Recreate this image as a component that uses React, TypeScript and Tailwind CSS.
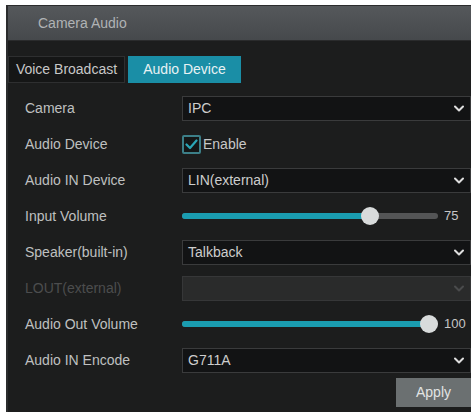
import { ReactNode } from 'react';

function Chevron({ dim }: { dim?: boolean }) {
  return (
    <svg width="10" height="7" viewBox="0 0 10 7" className="shrink-0">
      <polyline points="1,1.5 5,5.5 9,1.5" fill="none" stroke={dim ? '#4a4b4c' : '#dedede'} strokeWidth="2" strokeLinecap="round" strokeLinejoin="round" />
    </svg>
  );
}

function Select({ value, disabled }: { value?: string; disabled?: boolean }) {
  return (
    <div
      className={`flex h-[25px] flex-1 items-center justify-between border pl-[5px] pr-[6px] ${
        disabled ? 'border-[#363738] bg-[#2a2b2b]' : 'border-[#3a3b3c] bg-[#121314]'
      }`}
    >
      <span className="text-[14px] text-[#cdcdcd]">{value}</span>
      <Chevron dim={disabled} />
    </div>
  );
}

function Slider({ value }: { value: number }) {
  return (
    <div className="flex flex-1 items-center">
      <div className="relative h-[6px] w-[256px] rounded-full bg-[#545556]">
        <div
          className="absolute left-0 top-0 h-full rounded-full bg-[#1a9db0]"
          style={{ width: `${9 + (value / 100) * 238}px` }}
        />
        <div
          className="absolute top-1/2 h-[18px] w-[18px] -translate-y-1/2 rounded-full bg-[#d8dbdb]"
          style={{ left: `${(value / 100) * 238}px` }}
        />
      </div>
      <span className="ml-[6px] text-[13px] text-[#c6c6c6]">{value}</span>
    </div>
  );
}

function Row({ label, dim, children }: { label: string; dim?: boolean; children: ReactNode }) {
  return (
    <div className="flex h-[36px] items-center">
      <div className={`w-[174px] pl-[17px] text-[14px] ${dim ? 'text-[#4c4d4e]' : 'text-[#bfc0c0]'}`}>{label}</div>
      <div className="flex flex-1 items-center">{children}</div>
    </div>
  );
}

export default function App() {
  return (
    <div
      className="h-[412px] w-[473px] bg-white pl-[6px] pr-[2px] pt-[5px]"
      style={{ fontFamily: '"Liberation Sans", Arial, sans-serif' }}
    >
      <div className="flex h-full flex-col border-l-2 border-t border-[#2b2c2d] bg-[#1c1d1d]">
        <div className="flex h-[35px] items-center border-b border-[#2a2b2c] bg-gradient-to-b from-[#55585b] to-[#46494c] pl-[30px] text-[14px] text-[#b0b3b5]">
          Camera Audio
        </div>

        <div className="mt-[15px] flex h-[27px]">
          <div className="flex w-[117px] items-center justify-center border border-[#2e2f30] bg-[#151616] text-[14px] text-[#c8c8c8]">
            Voice Broadcast
          </div>
          <div className="ml-[3px] flex w-[113px] items-center justify-center bg-[#1a8ea6] text-[14px] text-[#e8f2f4]">
            Audio Device
          </div>
        </div>

        <div className="mt-[7px] flex flex-col">
          <Row label="Camera">
            <Select value="IPC" />
          </Row>
          <Row label="Audio Device">
            <div className="flex items-center">
              <div className="flex h-[19px] w-[19px] items-center justify-center rounded-[2px] border-2 border-[#3c7f88] bg-[#141616]">
                <svg width="13" height="11" viewBox="0 0 13 11">
                  <polyline points="1.5,5.5 5,9 11.5,1.5" fill="none" stroke="#2aa6b6" strokeWidth="2.2" strokeLinecap="round" strokeLinejoin="round" />
                </svg>
              </div>
              <span className="ml-[2px] text-[14px] text-[#c8c8c8]">Enable</span>
            </div>
          </Row>
          <Row label="Audio IN Device">
            <Select value="LIN(external)" />
          </Row>
          <Row label="Input Volume">
            <Slider value={75} />
          </Row>
          <Row label="Speaker(built-in)">
            <Select value="Talkback" />
          </Row>
          <Row label="LOUT(external)" dim>
            <Select disabled />
          </Row>
          <Row label="Audio Out Volume">
            <Slider value={100} />
          </Row>
          <Row label="Audio IN Encode">
            <Select value="G711A" />
          </Row>
        </div>

        <div className="flex justify-end">
          <button className="h-[29px] w-[75px] bg-[#6b7071] text-[14px] text-[#e2e4e4]">Apply</button>
        </div>
      </div>
    </div>
  );
}
